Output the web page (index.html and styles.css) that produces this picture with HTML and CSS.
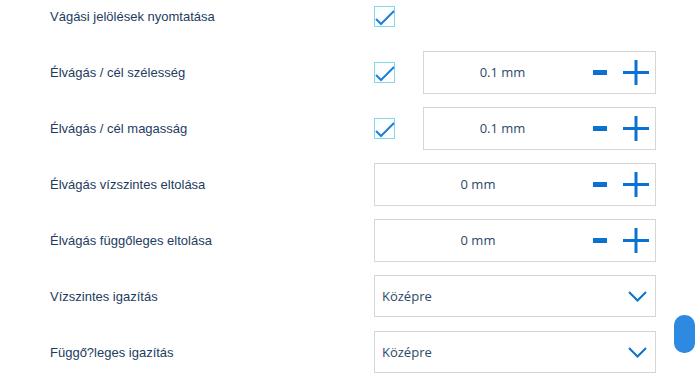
FILE: index.html
```html
<!DOCTYPE html>
<html lang="hu">
<head>
    <meta charset="UTF-8">
    <title>Nyomtatási beállítások</title>
    <link rel="stylesheet" href="styles.css">
</head>
<body>
    <div class="settings">
        <div class="row">
            <label class="label">Vágási jelölések nyomtatása</label>
            <div class="controls">
                <span class="check">
                    <svg width="21" height="21" viewBox="0 0 21 21"><path d="M2 13 L7 18 L20 5" fill="none" stroke="#1f7fd8" stroke-width="2"/></svg>
                </span>
            </div>
        </div>

        <div class="row">
            <label class="label">Élvágás / cél szélesség</label>
            <div class="controls">
                <span class="check">
                    <svg width="21" height="21" viewBox="0 0 21 21"><path d="M2 13 L7 18 L20 5" fill="none" stroke="#1f7fd8" stroke-width="2"/></svg>
                </span>
                <div class="box stepper short">
                    <span class="value">0.1 mm</span>
                    <span class="buttons">
                        <svg class="minus" width="14" height="5" viewBox="0 0 14 5"><rect width="14" height="5" fill="#0b72d2"/></svg>
                        <svg class="plus" width="26" height="25" viewBox="0 0 26 25"><rect x="0" y="11" width="26" height="3" fill="#0b72d2"/><rect x="11.5" y="0" width="3" height="25" fill="#0b72d2"/></svg>
                    </span>
                </div>
            </div>
        </div>

        <div class="row">
            <label class="label">Élvágás / cél magasság</label>
            <div class="controls">
                <span class="check">
                    <svg width="21" height="21" viewBox="0 0 21 21"><path d="M2 13 L7 18 L20 5" fill="none" stroke="#1f7fd8" stroke-width="2"/></svg>
                </span>
                <div class="box stepper short">
                    <span class="value">0.1 mm</span>
                    <span class="buttons">
                        <svg class="minus" width="14" height="5" viewBox="0 0 14 5"><rect width="14" height="5" fill="#0b72d2"/></svg>
                        <svg class="plus" width="26" height="25" viewBox="0 0 26 25"><rect x="0" y="11" width="26" height="3" fill="#0b72d2"/><rect x="11.5" y="0" width="3" height="25" fill="#0b72d2"/></svg>
                    </span>
                </div>
            </div>
        </div>

        <div class="row">
            <label class="label">Élvágás vízszintes eltolása</label>
            <div class="controls">
                <div class="box stepper">
                    <span class="value">0 mm</span>
                    <span class="buttons">
                        <svg class="minus" width="14" height="5" viewBox="0 0 14 5"><rect width="14" height="5" fill="#0b72d2"/></svg>
                        <svg class="plus" width="26" height="25" viewBox="0 0 26 25"><rect x="0" y="11" width="26" height="3" fill="#0b72d2"/><rect x="11.5" y="0" width="3" height="25" fill="#0b72d2"/></svg>
                    </span>
                </div>
            </div>
        </div>

        <div class="row">
            <label class="label">Élvágás függőleges eltolása</label>
            <div class="controls">
                <div class="box stepper">
                    <span class="value">0 mm</span>
                    <span class="buttons">
                        <svg class="minus" width="14" height="5" viewBox="0 0 14 5"><rect width="14" height="5" fill="#0b72d2"/></svg>
                        <svg class="plus" width="26" height="25" viewBox="0 0 26 25"><rect x="0" y="11" width="26" height="3" fill="#0b72d2"/><rect x="11.5" y="0" width="3" height="25" fill="#0b72d2"/></svg>
                    </span>
                </div>
            </div>
        </div>

        <div class="row">
            <label class="label">Vízszintes igazítás</label>
            <div class="controls">
                <div class="box select">
                    <span class="option">Középre</span>
                    <svg width="19" height="11" viewBox="0 0 19 11"><path d="M1 1 L9.5 9.5 L18 1" fill="none" stroke="#0b72d2" stroke-width="2"/></svg>
                </div>
            </div>
        </div>

        <div class="row">
            <label class="label">Függő?leges igazítás</label>
            <div class="controls">
                <div class="box select">
                    <span class="option">Középre</span>
                    <svg width="19" height="11" viewBox="0 0 19 11"><path d="M1 1 L9.5 9.5 L18 1" fill="none" stroke="#0b72d2" stroke-width="2"/></svg>
                </div>
            </div>
        </div>
    </div>

    <div class="scroll-thumb"></div>
</body>
</html>
```

FILE: styles.css
```css
body {
    margin: 0;
    background: #fff;
    overflow: hidden;
    font-family: "Liberation Sans", Arial, sans-serif;
}

.settings {
    margin-top: -12px;
    padding-left: 50px;
}

.row {
    display: flex;
    align-items: center;
    height: 56px;
}

.label {
    width: 324px;
    font-size: 13px;
    color: #1d3c61;
}

.controls {
    display: flex;
    align-items: center;
    gap: 28px;
    width: 282px;
}

/* checkbox */
.check {
    display: flex;
    width: 19px;
    height: 19px;
    border: 1px solid #80d8ea;
    flex-shrink: 0;
}

.check svg {
    margin: -1px;
}

.box {
    box-sizing: border-box;
    display: flex;
    align-items: center;
    flex: 1;
    height: 43px;
    border: 1px solid #d6d6d6;
    font-family: "Open Sans", sans-serif;
    font-size: 13px;
    color: #2c4868;
}

.stepper .value {
    flex: 1;
    text-align: center;
}

.stepper .buttons {
    display: flex;
    align-items: center;
    gap: 16px;
    padding: 0 6px 0 12px;
}

.stepper .minus {
    margin-top: 1px;
}

.select {
    height: 42px;
    justify-content: space-between;
    padding: 0 8px 0 7px;
}

.select svg {
    margin-top: 1px;
}

.scroll-thumb {
    position: absolute;
    left: 674px;
    top: 315px;
    width: 21px;
    height: 38px;
    border-radius: 10px;
    background: #2e89e0;
}
```
